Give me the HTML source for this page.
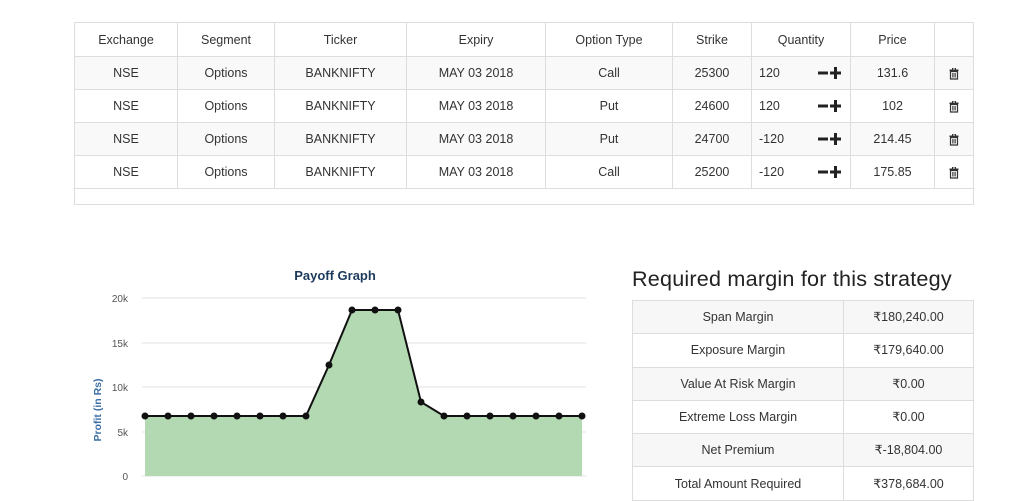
<!DOCTYPE html>
<html><head><meta charset="utf-8"><style>
body{margin:0;width:1035px;height:499px;overflow:hidden;background:#fff;font-family:"Liberation Sans",sans-serif;color:#333;position:relative}
table{border-collapse:collapse;position:absolute;font-size:12.5px}
td{border:1px solid #ddd;text-align:center;padding:0;vertical-align:middle;line-height:16px}
td svg{vertical-align:middle}
#t1{left:74px;top:22px;width:900px}
#t1 tr{height:33px}
#t1 tr.sh td{background:#f9f9f9}
.q{display:flex;justify-content:space-between;align-items:center;padding:0 7px 0 7px}
.pm{display:inline-flex;align-items:center;margin-right:1px}
#t2{left:632px;top:300px;width:342px;font-size:12.5px}
#t2 tr{height:33.3px}
#t2 tr.sh td{background:#f7f7f7}
h2{position:absolute;left:632px;top:266px;margin:0;font-weight:normal;font-size:21.6px;color:#222;letter-spacing:0.2px}
</style></head><body>
<table id="t1">
<tr style="height:34px"><td style="width:102px">Exchange</td><td style="width:96px">Segment</td><td style="width:131px">Ticker</td><td style="width:138px">Expiry</td><td style="width:126px">Option Type</td><td style="width:78px">Strike</td><td style="width:98px">Quantity</td><td style="width:83px">Price</td><td></td></tr>
<tr class="sh"><td>NSE</td><td>Options</td><td>BANKNIFTY</td><td>MAY 03 2018</td><td>Call</td><td>25300</td><td><div class="q"><span>120</span><span class="pm"><svg width="24" height="12"><rect x="0" y="4.5" width="10" height="3" fill="#222"/><rect x="12" y="4.5" width="11" height="3" fill="#222"/><rect x="16" y="0" width="3" height="12" fill="#222"/></svg></span></div></td><td>131.6</td><td><svg width="10" height="12" viewBox="0 0 10 12"><rect x="0.5" y="1.5" width="9" height="1.5" fill="#333"/><rect x="3.5" y="0" width="3" height="2" fill="none" stroke="#333" stroke-width="1"/><path d="M1.5 3.5h7v7.5h-7z" fill="none" stroke="#333" stroke-width="1.2"/><path d="M3.7 5v4.5M5 5v4.5M6.3 5v4.5" stroke="#333" stroke-width="0.8"/></svg></td></tr>
<tr><td>NSE</td><td>Options</td><td>BANKNIFTY</td><td>MAY 03 2018</td><td>Put</td><td>24600</td><td><div class="q"><span>120</span><span class="pm"><svg width="24" height="12"><rect x="0" y="4.5" width="10" height="3" fill="#222"/><rect x="12" y="4.5" width="11" height="3" fill="#222"/><rect x="16" y="0" width="3" height="12" fill="#222"/></svg></span></div></td><td>102</td><td><svg width="10" height="12" viewBox="0 0 10 12"><rect x="0.5" y="1.5" width="9" height="1.5" fill="#333"/><rect x="3.5" y="0" width="3" height="2" fill="none" stroke="#333" stroke-width="1"/><path d="M1.5 3.5h7v7.5h-7z" fill="none" stroke="#333" stroke-width="1.2"/><path d="M3.7 5v4.5M5 5v4.5M6.3 5v4.5" stroke="#333" stroke-width="0.8"/></svg></td></tr>
<tr class="sh"><td>NSE</td><td>Options</td><td>BANKNIFTY</td><td>MAY 03 2018</td><td>Put</td><td>24700</td><td><div class="q"><span>-120</span><span class="pm"><svg width="24" height="12"><rect x="0" y="4.5" width="10" height="3" fill="#222"/><rect x="12" y="4.5" width="11" height="3" fill="#222"/><rect x="16" y="0" width="3" height="12" fill="#222"/></svg></span></div></td><td>214.45</td><td><svg width="10" height="12" viewBox="0 0 10 12"><rect x="0.5" y="1.5" width="9" height="1.5" fill="#333"/><rect x="3.5" y="0" width="3" height="2" fill="none" stroke="#333" stroke-width="1"/><path d="M1.5 3.5h7v7.5h-7z" fill="none" stroke="#333" stroke-width="1.2"/><path d="M3.7 5v4.5M5 5v4.5M6.3 5v4.5" stroke="#333" stroke-width="0.8"/></svg></td></tr>
<tr><td>NSE</td><td>Options</td><td>BANKNIFTY</td><td>MAY 03 2018</td><td>Call</td><td>25200</td><td><div class="q"><span>-120</span><span class="pm"><svg width="24" height="12"><rect x="0" y="4.5" width="10" height="3" fill="#222"/><rect x="12" y="4.5" width="11" height="3" fill="#222"/><rect x="16" y="0" width="3" height="12" fill="#222"/></svg></span></div></td><td>175.85</td><td><svg width="10" height="12" viewBox="0 0 10 12"><rect x="0.5" y="1.5" width="9" height="1.5" fill="#333"/><rect x="3.5" y="0" width="3" height="2" fill="none" stroke="#333" stroke-width="1"/><path d="M1.5 3.5h7v7.5h-7z" fill="none" stroke="#333" stroke-width="1.2"/><path d="M3.7 5v4.5M5 5v4.5M6.3 5v4.5" stroke="#333" stroke-width="0.8"/></svg></td></tr>
<tr style="height:16px"><td colspan="9"></td></tr>
</table>
<svg width="1035" height="499" style="position:absolute;left:0;top:0" font-family="Liberation Sans, sans-serif">
<text x="335" y="280" text-anchor="middle" font-size="13" font-weight="bold" fill="#1b3a5c">Payoff Graph</text>
<g stroke="#e0e0e0" stroke-width="1">
<line x1="142" x2="586" y1="298" y2="298"/><line x1="142" x2="586" y1="343" y2="343"/><line x1="142" x2="586" y1="387" y2="387"/><line x1="142" x2="586" y1="432" y2="432"/><line x1="142" x2="586" y1="476" y2="476"/></g>
<g font-size="10" fill="#555" text-anchor="end">
<text x="128" y="302">20k</text><text x="128" y="347">15k</text><text x="128" y="391">10k</text><text x="128" y="436">5k</text><text x="128" y="480">0</text></g>
<text transform="translate(101,410) rotate(-90)" text-anchor="middle" font-size="10.5" font-weight="bold" fill="#3a6ea5">Profit (in Rs)</text>
<polygon fill="#b3d9b3" points="145,476 145,416 306,416 329,365 352,310 375,310 398,310 421,402 444,416 582,416 582,476"/>
<polyline fill="none" stroke="#111" stroke-width="2" points="145,416 306,416 329,365 352,310 398,310 421,402 444,416 582,416"/>
<g fill="#111">
<circle cx="145" cy="416" r="3.5"/><circle cx="168" cy="416" r="3.5"/><circle cx="191" cy="416" r="3.5"/><circle cx="214" cy="416" r="3.5"/><circle cx="237" cy="416" r="3.5"/><circle cx="260" cy="416" r="3.5"/><circle cx="283" cy="416" r="3.5"/><circle cx="306" cy="416" r="3.5"/><circle cx="329" cy="365" r="3.5"/><circle cx="352" cy="310" r="3.5"/><circle cx="375" cy="310" r="3.5"/><circle cx="398" cy="310" r="3.5"/><circle cx="421" cy="402" r="3.5"/><circle cx="444" cy="416" r="3.5"/><circle cx="467" cy="416" r="3.5"/><circle cx="490" cy="416" r="3.5"/><circle cx="513" cy="416" r="3.5"/><circle cx="536" cy="416" r="3.5"/><circle cx="559" cy="416" r="3.5"/><circle cx="582" cy="416" r="3.5"/></g>
</svg>
<h2>Required margin for this strategy</h2>
<table id="t2">
<tr class="sh"><td style="width:210px">Span Margin</td><td>₹180,240.00</td></tr>
<tr><td>Exposure Margin</td><td>₹179,640.00</td></tr>
<tr class="sh"><td>Value At Risk Margin</td><td>₹0.00</td></tr>
<tr><td>Extreme Loss Margin</td><td>₹0.00</td></tr>
<tr class="sh"><td>Net Premium</td><td>₹-18,804.00</td></tr>
<tr><td>Total Amount Required</td><td>₹378,684.00</td></tr>
</table>
</body></html>
